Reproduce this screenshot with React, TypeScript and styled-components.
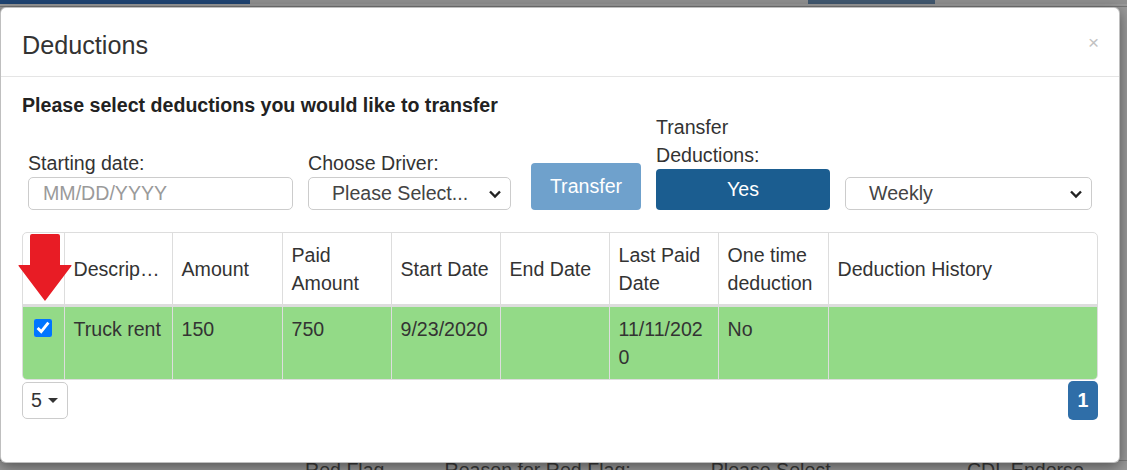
import React from "react";
import styled, { createGlobalStyle } from "styled-components";

const Global = createGlobalStyle`
  html, body { margin: 0; padding: 0; }
  body {
    background: #9a9a9a;
    font-family: "Liberation Sans", Arial, sans-serif;
    color: #333;
  }
  * { box-sizing: border-box; }
`;

const Page = styled.div`
  position: relative;
  width: 1127px;
  height: 470px;
  overflow: hidden;
  background: #999999;
  display: flex;
  flex-direction: column;
  justify-content: space-between;
`;

const TopStrip = styled.div`
  display: flex;
  height: 7px;
  border-bottom: 1px solid #747474;
`;

const Segment = styled.div<{ $w?: number; $c: string }>`
  height: 4px;
  background: ${(p) => p.$c};
  ${(p) => (p.$w ? `width: ${p.$w}px;` : "flex: 1;")}
`;

const BottomStrip = styled.div`
  height: 10px;
  display: flex;
  align-items: flex-start;
  overflow: hidden;
  border-top: 1px solid #7a7a7a;
  padding-left: 305px;
  gap: 60px;
`;

const GhostText = styled.span<{ $ml?: number }>`
  font-size: 19.6px;
  line-height: 18px;
  color: #3a3a3a;
  white-space: nowrap;
  margin-left: ${(p) => p.$ml ?? 0}px;
`;

const Modal = styled.div`
  position: absolute;
  left: 0;
  top: 7px;
  width: 1120px;
  background: #fff;
  border: 1px solid rgba(0, 0, 0, 0.25);
  border-radius: 6px;
  box-shadow: 0 4px 14px rgba(0, 0, 0, 0.45);
`;

const Header = styled.div`
  height: 69px;
  display: flex;
  align-items: center;
  justify-content: space-between;
  padding: 6px 20px 0 21px;
  border-bottom: 1px solid #e5e5e5;
`;

const Title = styled.h4`
  margin: 0;
  font-size: 25.2px;
  line-height: 36px;
  font-weight: normal;
  color: #333;
`;

const Close = styled.span`
  font-size: 19px;
  line-height: 1;
  color: #c2c2c2;
  margin-top: -6px;
`;

const Body = styled.div`
  padding: 20px 21px 42px 21px;
`;

const Lead = styled.p`
  margin: 0;
  font-size: 19.6px;
  line-height: 16px;
  font-weight: bold;
  color: #222;
`;

const FormRow = styled.div`
  display: flex;
  align-items: flex-end;
  padding-left: 6px;
`;

const Field = styled.div<{ $w: number; $ml?: number }>`
  display: flex;
  flex-direction: column;
  width: ${(p) => p.$w}px;
  margin-left: ${(p) => p.$ml ?? 0}px;
`;

const Label = styled.label`
  font-size: 19.6px;
  line-height: 28px;
  color: #333;
`;

const TextInput = styled.input`
  height: 33px;
  width: 100%;
  border: 1px solid #cccccc;
  border-radius: 5px;
  padding: 0 14px;
  font-family: "Liberation Sans", Arial, sans-serif;
  font-size: 19.6px;
  color: #555;
  outline: none;
  &::placeholder {
    color: #9a9a9a;
  }
`;

const SelectBox = styled.div`
  height: 33px;
  width: 100%;
  border: 1px solid #cccccc;
  border-radius: 5px;
  display: flex;
  align-items: center;
  justify-content: space-between;
  padding: 0 8px 0 23px;
  font-size: 19.6px;
  color: #444;
  background: #fff;
`;

const Button = styled.button<{ $w: number; $h: number; $bg: string; $ml?: number }>`
  width: ${(p) => p.$w}px;
  height: ${(p) => p.$h}px;
  margin-left: ${(p) => p.$ml ?? 0}px;
  background: ${(p) => p.$bg};
  color: #fff;
  border: none;
  border-radius: 4px;
  font-family: "Liberation Sans", Arial, sans-serif;
  font-size: 19.6px;
  padding: 0;
`;

const TableArea = styled.div`
  position: relative;
  margin-top: 22px;
`;

const TableWrap = styled.div`
  border: 1px solid #dddddd;
  border-radius: 5px;
  overflow: hidden;
`;

const Table = styled.table`
  width: 100%;
  border-collapse: collapse;
  table-layout: fixed;
  font-size: 19.6px;
  color: #333;
`;

const Col = styled.col<{ $w?: number }>`
  ${(p) => (p.$w ? `width: ${p.$w}px;` : "")}
`;

const Th = styled.th<{ $nowrap?: boolean }>`
  padding: 8px 8px 7px 9px;
  line-height: 28px;
  font-weight: normal;
  text-align: left;
  vertical-align: middle;
  border-bottom: 3px solid #dddddd;
  border-left: 1px solid #dddddd;
  &:first-child { border-left: none; }
  ${(p) =>
    p.$nowrap
      ? "white-space: nowrap; overflow: hidden; text-overflow: ellipsis;"
      : ""}
`;

const Td = styled.td`
  padding: 8px 8px 8px 9px;
  line-height: 28px;
  vertical-align: top;
  background: #93da87;
  border-left: 1px solid #dddddd;
  overflow-wrap: anywhere;
  &:first-child { border-left: none; }
`;

const CheckCell = styled(Td)`
  text-align: center;
  padding: 12px 0 0 0;
`;

const Check = styled.input`
  width: 18px;
  height: 18px;
  margin: 0;
  accent-color: #0075ff;
  vertical-align: top;
`;

const ArrowMark = styled.svg`
  position: absolute;
  left: -4px;
  top: 2px;
`;

const Footer = styled.div`
  display: flex;
  justify-content: space-between;
  align-items: flex-start;
  margin-top: 2px;
`;

const SizeButton = styled.div`
  width: 46px;
  height: 37px;
  border: 1px solid #cccccc;
  border-radius: 5px;
  display: flex;
  align-items: center;
  padding-left: 8px;
  gap: 6px;
  font-size: 19.6px;
  color: #333;
`;

const Caret = styled.span`
  width: 0;
  height: 0;
  border-left: 5px solid transparent;
  border-right: 5px solid transparent;
  border-top: 5px solid #333;
`;

const PageButton = styled.div`
  width: 30px;
  height: 39px;
  margin-top: -1px;
  border-radius: 5px;
  background: #2f6ea8;
  color: #fff;
  font-weight: bold;
  font-size: 19.6px;
  display: flex;
  align-items: center;
  justify-content: center;
`;

const Chevron = () => (
  <svg width="14" height="10" viewBox="0 0 14 10">
    <path d="M2 2.5 L7 7.5 L12 2.5" fill="none" stroke="#222" strokeWidth="2.4" />
  </svg>
);

const columns: { label: string; w?: number; nowrap?: boolean }[] = [
  { label: "", w: 41 },
  { label: "Description", w: 108, nowrap: true },
  { label: "Amount", w: 110 },
  { label: "Paid Amount", w: 109 },
  { label: "Start Date", w: 109 },
  { label: "End Date", w: 109 },
  { label: "Last Paid Date", w: 109 },
  { label: "One time deduction", w: 110 },
  { label: "Deduction History" },
];

const row = ["Truck rent", "150", "750", "9/23/2020", "", "11/11/2020", "No", ""];

export default function App() {
  return (
    <>
      <Global />
      <Page>
        <TopStrip>
          <Segment $w={250} $c="#1f4472" />
          <Segment $w={558} $c="#8f8f8f" />
          <Segment $w={127} $c="#40586f" />
          <Segment $c="#8f8f8f" />
        </TopStrip>
        <BottomStrip>
          <GhostText>Red Flag</GhostText>
          <GhostText>Reason for Red Flag:</GhostText>
          <GhostText $ml={20}>Please Select...</GhostText>
          <GhostText $ml={60}>CDL Endorse</GhostText>
        </BottomStrip>

        <Modal>
          <Header>
            <Title>Deductions</Title>
            <Close>×</Close>
          </Header>
          <Body>
            <Lead>Please select deductions you would like to transfer</Lead>
            <FormRow>
              <Field $w={265}>
                <Label>Starting date:</Label>
                <TextInput placeholder="MM/DD/YYYY" />
              </Field>
              <Field $w={203} $ml={15}>
                <Label>Choose Driver:</Label>
                <SelectBox>
                  <span>Please Select...</span>
                  <Chevron />
                </SelectBox>
              </Field>
              <Button $w={110} $h={47} $bg="#6fa1cc" $ml={20}>
                Transfer
              </Button>
              <Field $w={174} $ml={15}>
                <Label>Transfer Deductions:</Label>
                <Button $w={174} $h={41} $bg="#1b5d90">
                  Yes
                </Button>
              </Field>
              <Field $w={247} $ml={15}>
                <SelectBox>
                  <span>Weekly</span>
                  <Chevron />
                </SelectBox>
              </Field>
            </FormRow>

            <TableArea>
              <TableWrap>
                <Table>
                  <colgroup>
                    {columns.map((c, i) => (
                      <Col key={i} $w={c.w} />
                    ))}
                  </colgroup>
                  <thead>
                    <tr>
                      {columns.map((c, i) => (
                        <Th key={i} $nowrap={c.nowrap}>
                          {c.label}
                        </Th>
                      ))}
                    </tr>
                  </thead>
                  <tbody>
                    <tr>
                      <CheckCell>
                        <Check type="checkbox" defaultChecked />
                      </CheckCell>
                      {row.map((v, i) => (
                        <Td key={i}>{v}</Td>
                      ))}
                    </tr>
                  </tbody>
                </Table>
              </TableWrap>
              <ArrowMark width="54" height="67" viewBox="0 0 54 67">
                <path
                  d="M14 0 H40 Q42 0 42 2 V31 H53 Q54 31 53.4 32 L27 67 L0.6 32 Q0 31 1 31 H12 V2 Q12 0 14 0 Z"
                  fill="#e81c25"
                />
              </ArrowMark>
            </TableArea>

            <Footer>
              <SizeButton>
                5 <Caret />
              </SizeButton>
              <PageButton>1</PageButton>
            </Footer>
          </Body>
        </Modal>
      </Page>
    </>
  );
}
